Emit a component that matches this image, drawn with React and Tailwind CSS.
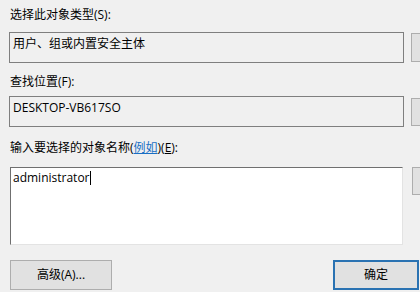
import React from "react";

const font = { fontFamily: '"Open Sans", "Noto Sans CJK SC", sans-serif' };

function SideButton({ className = "" }) {
  return (
    <div
      className={`w-[80px] shrink-0 border border-[#adadad] bg-[#e1e1e1] ${className}`}
    />
  );
}

export default function App() {
  return (
    <div
      className="w-[420px] h-[292px] overflow-hidden bg-[#f0f0f0] pl-[9px] pt-[7px] text-[12px] text-black"
      style={font}
    >
      {/* object type */}
      <div className="h-[16px] leading-[16px] pl-[1px]">选择此对象类型(S):</div>
      <div className="mt-[9px] flex items-center gap-[7px]">
        <div className="w-[395px] h-[31px] shrink-0 border border-[#7f7f7f] bg-[#f0f0f0] pl-[3px] pt-[3px] leading-[16px]">
          用户、组或内置安全主体
        </div>
        <SideButton className="h-[29px]" />
      </div>

      {/* location */}
      <div className="mt-[11px] h-[16px] leading-[16px] pl-[1px]">查找位置(F):</div>
      <div className="mt-[6px] flex items-center gap-[7px]">
        <div className="w-[395px] h-[31px] shrink-0 border border-[#7f7f7f] bg-[#f0f0f0] pl-[3px] pt-[3px] leading-[16px]">
          DESKTOP-VB617SO
        </div>
        <SideButton className="h-[28px]" />
      </div>

      {/* object names */}
      <div className="mt-[13px] h-[16px] leading-[16px] pl-[1px]">
        输入要选择的对象名称(
        <span className="text-[#1a6fc4] underline">例如</span>)(<span className="underline">E</span>):
      </div>
      <div className="mt-[11px] flex items-start gap-[9px]">
        <div className="w-[393px] h-[78px] shrink-0 ml-[1px] border-t border-l border-t-[#6f6f6f] border-l-[#6f6f6f] border-r border-b border-r-[#e3e3e3] border-b-[#e3e3e3] bg-white pl-[2px] pt-[2px]">
          <div className="flex items-center h-[16px] leading-[16px]">
            <span>administrator</span>
            <span className="inline-block w-[1px] h-[14px] bg-black" />
          </div>
        </div>
        <SideButton className="h-[28px]" />
      </div>

      {/* bottom buttons */}
      <div className="mt-[15px] flex items-center justify-between">
        <div className="ml-[1px] w-[102px] h-[30px] border border-[#adadad] bg-[#e1e1e1] flex items-center justify-center">
          高级(A)...
        </div>
        <div className="mr-[1px] w-[86px] h-[30px] border-2 border-[#2a72b2] bg-[#e1e1e1] flex items-center justify-center">
          确定
        </div>
      </div>
    </div>
  );
}
